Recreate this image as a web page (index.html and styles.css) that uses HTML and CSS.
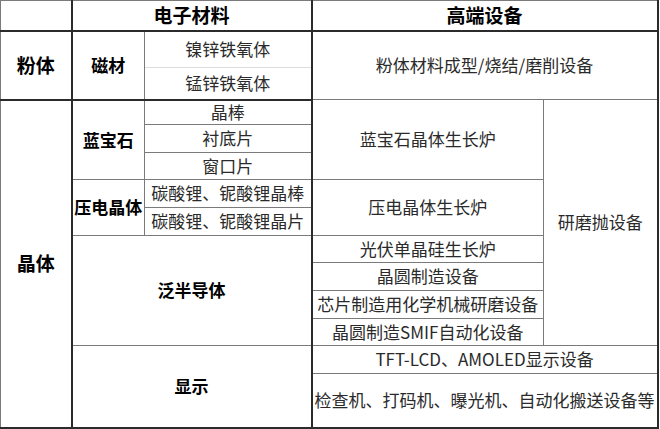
FILE: index.html
```html
<!DOCTYPE html>
<html lang="zh-CN">
<head>
<meta charset="utf-8">
<title>电子材料与高端设备</title>
<link rel="stylesheet" href="styles.css">
</head>
<body>
<table class="grid">
  <colgroup>
    <col class="c-a"><col class="c-b"><col class="c-c"><col class="c-d"><col class="c-e">
  </colgroup>
  <tr class="h-head">
    <th class="head cat-col"></th>
    <th class="head mat-end" colspan="2">电子材料</th>
    <th class="head" colspan="2">高端设备</th>
  </tr>
  <tr class="h-p1">
    <th class="cat cat-col sec-end" rowspan="2">粉体</th>
    <th class="sub sec-end" rowspan="2">磁材</th>
    <td class="mat-end light-bottom">镍锌铁氧体</td>
    <td colspan="2" rowspan="2">粉体材料成型/烧结/磨削设备</td>
  </tr>
  <tr class="h-p2">
    <td class="mat-end light-top sec-end">锰锌铁氧体</td>
  </tr>
  <tr class="h-25">
    <th class="cat cat-col" rowspan="11">晶体</th>
    <th class="sub" rowspan="3">蓝宝石</th>
    <td class="mat-end">晶棒</td>
    <td rowspan="3">蓝宝石晶体生长炉</td>
    <td rowspan="9">研磨抛设备</td>
  </tr>
  <tr class="h-28"><td class="mat-end">衬底片</td></tr>
  <tr class="h-27"><td class="mat-end">窗口片</td></tr>
  <tr class="h-28">
    <th class="sub" rowspan="2">压电晶体</th>
    <td class="mat-end">碳酸锂、铌酸锂晶棒</td>
    <td rowspan="2">压电晶体生长炉</td>
  </tr>
  <tr class="h-28"><td class="mat-end">碳酸锂、铌酸锂晶片</td></tr>
  <tr class="h-27">
    <th class="sub mat-end" rowspan="4" colspan="2">泛半导体</th>
    <td>光伏单晶硅生长炉</td>
  </tr>
  <tr class="h-28"><td>晶圆制造设备</td></tr>
  <tr class="h-28"><td>芯片制造用化学机械研磨设备</td></tr>
  <tr class="h-27"><td>晶圆制造SMIF自动化设备</td></tr>
  <tr class="h-28">
    <th class="sub mat-end" rowspan="2" colspan="2">显示</th>
    <td colspan="2">TFT-LCD、AMOLED显示设备</td>
  </tr>
  <tr class="h-54"><td colspan="2">检查机、打码机、曝光机、自动化搬送设备等</td></tr>
</table>
</body>
</html>
```

FILE: styles.css
```css
html, body {
  margin: 0;
  padding: 0;
  background: #ffffff;
}

body {
  font-family: "Noto Sans CJK SC", "Noto Sans", sans-serif;
  color: #2a2a2a;
}

.grid {
  border-collapse: collapse;
  table-layout: fixed;
  width: 658px;
  border-top: 1px solid #444444;
  border-left: 1px solid #999999;
  border-right: 2px solid #2b2b2b;
  border-bottom: 2px solid #2b2b2b;
}

.c-a { width: 71px; }
.c-b { width: 73px; }
.c-c { width: 167px; }
.c-d { width: 232px; }
.c-e { width: 114px; }

.grid th,
.grid td {
  padding: 0;
  border: 1px solid #7a7a7a;
  text-align: center;
  vertical-align: middle;
  white-space: nowrap;
  overflow: hidden;
  line-height: 1.2;
  font-size: 17px;
  font-weight: 400;
}

.grid th {
  color: #000000;
  font-weight: 700;
}

.grid .head {
  font-size: 19px;
  border-bottom: 2px solid #2b2b2b;
}

.grid .cat {
  font-size: 19px;
}

.grid .sub {
  font-size: 17px;
}

.grid .cat-col {
  border-right: 2px solid #2b2b2b;
}

.grid .mat-end {
  border-right: 2px solid #2b2b2b;
}

.grid .sec-end {
  border-bottom: 2px solid #2b2b2b;
}

.grid .light-bottom {
  border-bottom: 1px solid #dddddd;
}

.grid .light-top {
  border-top: 1px solid #dddddd;
}

.h-head { height: 30px; }
.h-p1 { height: 37px; }
.h-p2 { height: 32px; }
.h-25 { height: 25px; }
.h-27 { height: 27px; }
.h-28 { height: 28px; }
.h-54 { height: 54px; }
```
